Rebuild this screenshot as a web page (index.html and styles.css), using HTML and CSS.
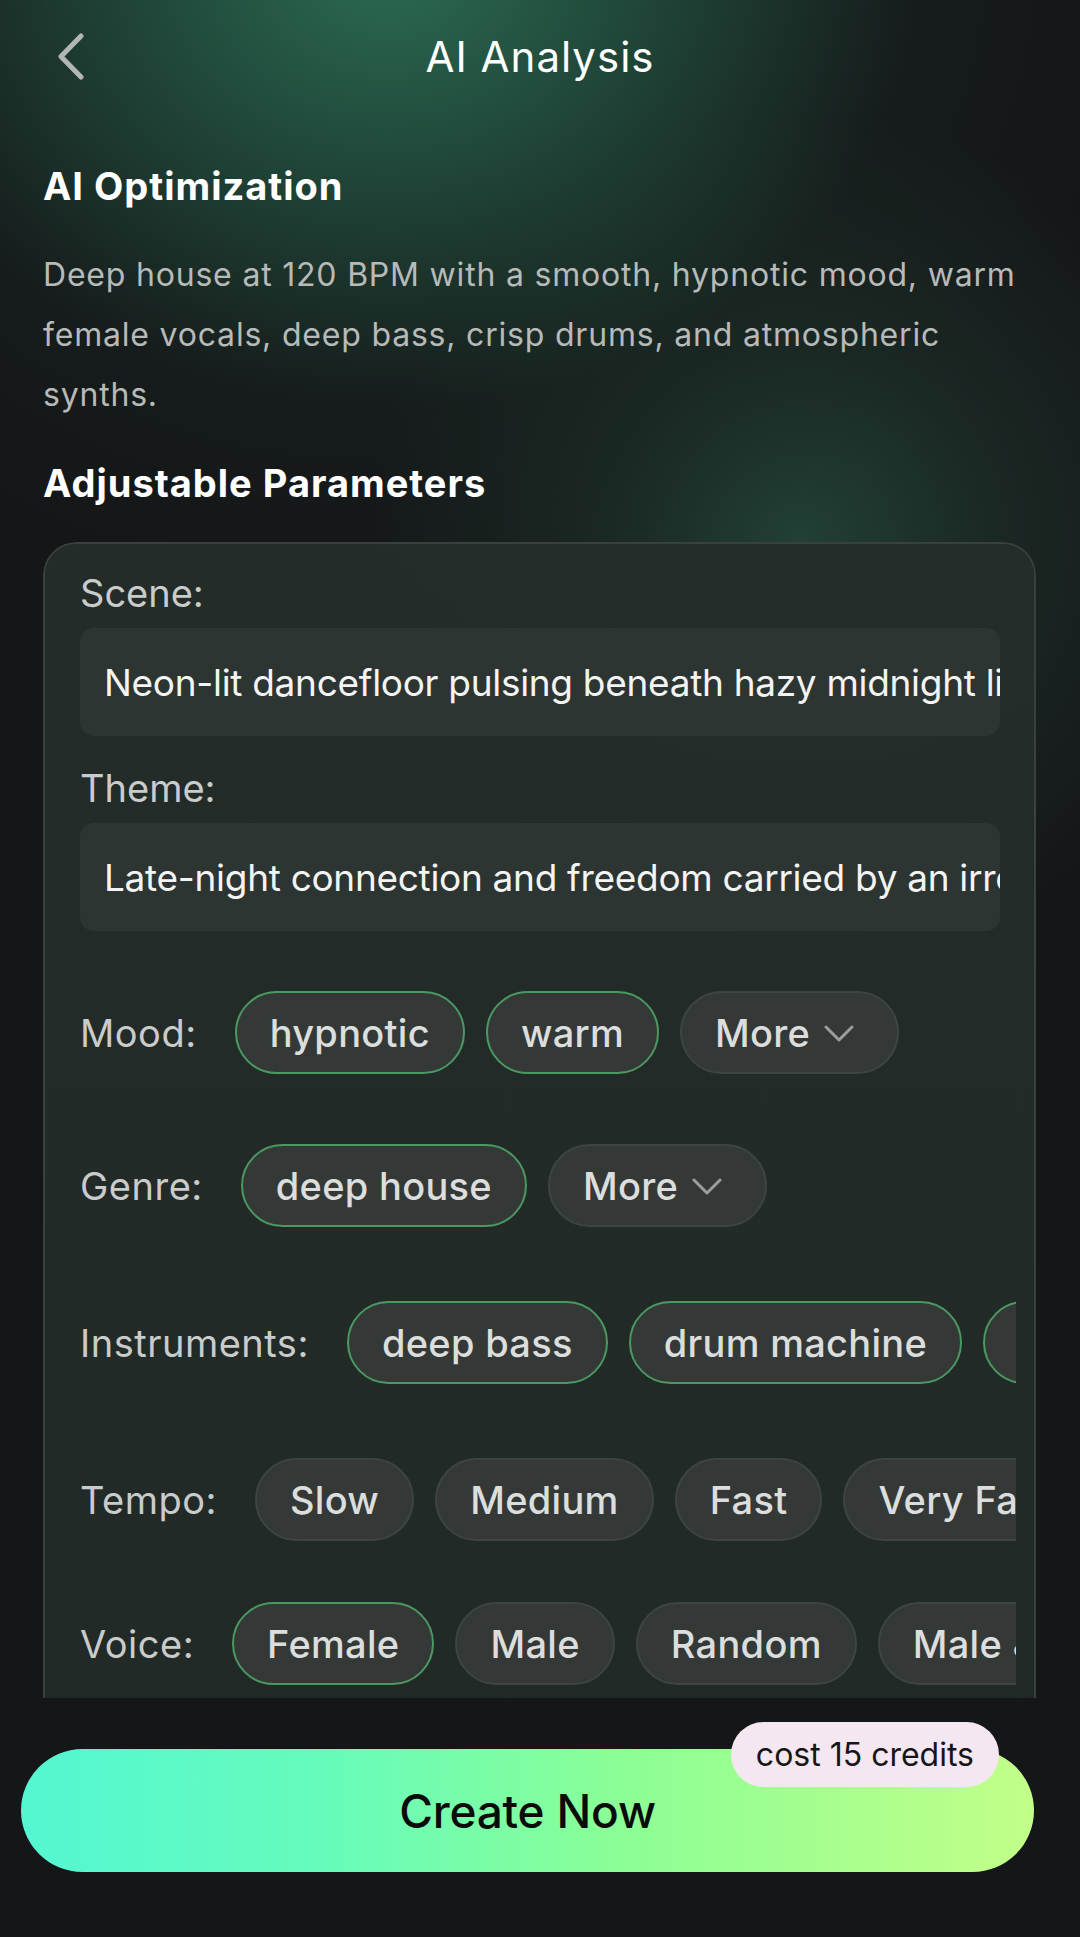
FILE: index.html
```html
<!DOCTYPE html>
<html lang="en">
<head>
<meta charset="utf-8">
<title>AI Analysis</title>
<link rel="stylesheet" href="styles.css">
</head>
<body>
<div class="page">
  <header class="topbar">
    <div class="back">
      <svg width="30" height="50" viewBox="0 0 30 50"><polyline points="24,3 4,23.5 24,44" fill="none" stroke="#b3b6b4" stroke-width="5" stroke-linecap="round" stroke-linejoin="round"/></svg>
    </div>
    <h1 class="title">AI Analysis</h1>
    <div></div>
  </header>

  <h2 class="section-title opt">AI Optimization</h2>
  <p class="desc">Deep house at 120 BPM with a smooth, hypnotic mood, warm female vocals, deep bass, crisp drums, and atmospheric synths.</p>

  <h2 class="section-title params">Adjustable Parameters</h2>

  <div class="clip">
    <div class="card">
      <div class="field-label">Scene:</div>
      <div class="input">Neon-lit dancefloor pulsing beneath hazy midnight lights</div>
      <div class="field-label theme">Theme:</div>
      <div class="input">Late-night connection and freedom carried by an irresistible groove</div>

      <div class="row row-mood">
        <span class="row-label">Mood:</span>
        <div class="chips">
          <span class="chip on">hypnotic</span>
          <span class="chip on">warm</span>
          <span class="chip more">More<svg class="caret" width="30" height="18" viewBox="0 0 30 18"><polyline points="2,2 15,15 28,2" fill="none" stroke="#9a9d9b" stroke-width="3" stroke-linecap="round" stroke-linejoin="round"/></svg></span>
        </div>
      </div>

      <div class="row row-genre">
        <span class="row-label">Genre:</span>
        <div class="chips">
          <span class="chip on">deep house</span>
          <span class="chip more">More<svg class="caret" width="30" height="18" viewBox="0 0 30 18"><polyline points="2,2 15,15 28,2" fill="none" stroke="#9a9d9b" stroke-width="3" stroke-linecap="round" stroke-linejoin="round"/></svg></span>
        </div>
      </div>

      <div class="row row-inst">
        <span class="row-label">Instruments:</span>
        <div class="chips">
          <span class="chip on">deep bass</span>
          <span class="chip on">drum machine</span>
          <span class="chip on">crisp drums</span>
          <span class="chip on">synth pads</span>
        </div>
      </div>

      <div class="row row-tempo">
        <span class="row-label">Tempo:</span>
        <div class="chips">
          <span class="chip">Slow</span>
          <span class="chip">Medium</span>
          <span class="chip">Fast</span>
          <span class="chip">Very Fast</span>
        </div>
      </div>

      <div class="row row-voice">
        <span class="row-label">Voice:</span>
        <div class="chips">
          <span class="chip on">Female</span>
          <span class="chip">Male</span>
          <span class="chip">Random</span>
          <span class="chip">Male &amp; Female</span>
        </div>
      </div>
    </div>
  </div>

  <div class="cta-wrap">
    <button class="cta">Create Now</button>
    <span class="badge">cost 15 credits</span>
  </div>
</div>
</body>
</html>
```

FILE: styles.css
```css
* { box-sizing: border-box; }

html, body {
  margin: 0;
  padding: 0;
}

body {
  width: 1080px;
  height: 1937px;
  overflow: hidden;
  font-family: "Inter", "Lato", "Noto Sans", sans-serif;
  color: #ffffff;
  background-color: #151618;
  background-image:
    radial-gradient(ellipse 760px 640px at 390px -40px, rgba(44, 112, 86, 0.95) 0%, rgba(36, 88, 69, 0.7) 35%, rgba(24, 40, 34, 0.3) 70%, rgba(21, 22, 24, 0) 100%),
    radial-gradient(circle 430px at 800px 540px, rgba(34, 66, 54, 0.95) 0%, rgba(30, 52, 44, 0.6) 45%, rgba(21, 22, 24, 0) 100%);
  background-repeat: no-repeat;
}

.page {
  width: 1080px;
  height: 1937px;
}

.topbar {
  height: 114px;
  display: grid;
  grid-template-columns: 1fr auto 1fr;
  align-items: center;
}

.back {
  padding-left: 57px;
  display: flex;
  align-items: center;
  padding-top: 2px;
}

.title {
  margin: 0;
  font-size: 42px;
  font-weight: 400;
  line-height: 48px;
  color: #ffffff;
  letter-spacing: 1px;
}

.section-title {
  margin: 0 0 0 43px;
  font-size: 38px;
  line-height: 46px;
  font-weight: 700;
  color: #ffffff;
  letter-spacing: 1px;
}

.opt { margin-top: 49px; }
.params { margin-top: 35px; }

.desc {
  margin: 36px 43px 0 43px;
  font-size: 32px;
  line-height: 60px;
  color: #b7bab8;
  letter-spacing: 0.8px;
}

.clip {
  margin: 36px 0 0 43px;
  width: 993px;
  height: 1156px;
  overflow: hidden;
  border-top-left-radius: 33px;
  border-top-right-radius: 33px;
}

.card {
  border: 2px solid #3a403d;
  border-radius: 33px;
  background: linear-gradient(180deg, rgba(36, 45, 41, 0.96) 0%, rgba(34, 42, 39, 0.98) 100%);
  padding: 26px 18px 60px 35px;
}

.field-label {
  font-size: 38px;
  line-height: 46px;
  color: #c9cccb;
}

.field-label.theme { margin-top: 29px; }

.input {
  margin-top: 12px;
  margin-right: 16px;
  height: 108px;
  border-radius: 14px;
  background: #2d3532;
  padding: 0 28px 0 24px;
  display: flex;
  align-items: center;
  font-size: 37px;
  color: #f3f4f3;
  white-space: nowrap;
  overflow: hidden;
  letter-spacing: -0.3px;
}

.row {
  display: flex;
  align-items: center;
}

.row-mood { margin-top: 60px; }
.row-genre { margin-top: 70px; }
.row-inst { margin-top: 74px; }
.row-tempo { margin-top: 74px; }
.row-voice { margin-top: 61px; }

.row-label {
  flex-shrink: 0;
  font-size: 38px;
  color: #c9cccb;
  margin-right: 38px;
  letter-spacing: 0.5px;
}

.chips {
  flex: 1;
  min-width: 0;
  display: flex;
  gap: 21px;
  overflow: hidden;
}

.chip {
  flex-shrink: 0;
  height: 83px;
  border-radius: 42px;
  border: 2px solid #3e4441;
  background: #343937;
  padding: 0 33px;
  display: flex;
  align-items: center;
  font-size: 38px;
  font-weight: 500;
  color: #dcdedd;
  white-space: nowrap;
  letter-spacing: 0.3px;
}

.chip.on {
  border-color: #4b9962;
}

.chip.more {
  padding-right: 43px;
}

.caret {
  margin-left: 14px;
  margin-top: 2px;
}

.cta-wrap {
  position: relative;
  margin: 51px 46px 0 21px;
}

.cta {
  display: block;
  width: 100%;
  height: 123px;
  border: none;
  border-radius: 62px;
  background: linear-gradient(90deg, #54f7d2 0%, #66fbbb 30%, #8cfe95 60%, #c2ff88 100%);
  font-family: "Inter", "Lato", sans-serif;
  font-size: 46px;
  font-weight: 500;
  color: #0b0b0b;
  letter-spacing: -0.2px;
  padding: 0;
}

.badge {
  position: absolute;
  right: 35px;
  top: -27px;
  height: 65px;
  padding: 0 25px;
  border-radius: 33px;
  background: #f5e7f1;
  color: #161616;
  font-size: 32px;
  display: flex;
  align-items: center;
  letter-spacing: 0;
}
```
